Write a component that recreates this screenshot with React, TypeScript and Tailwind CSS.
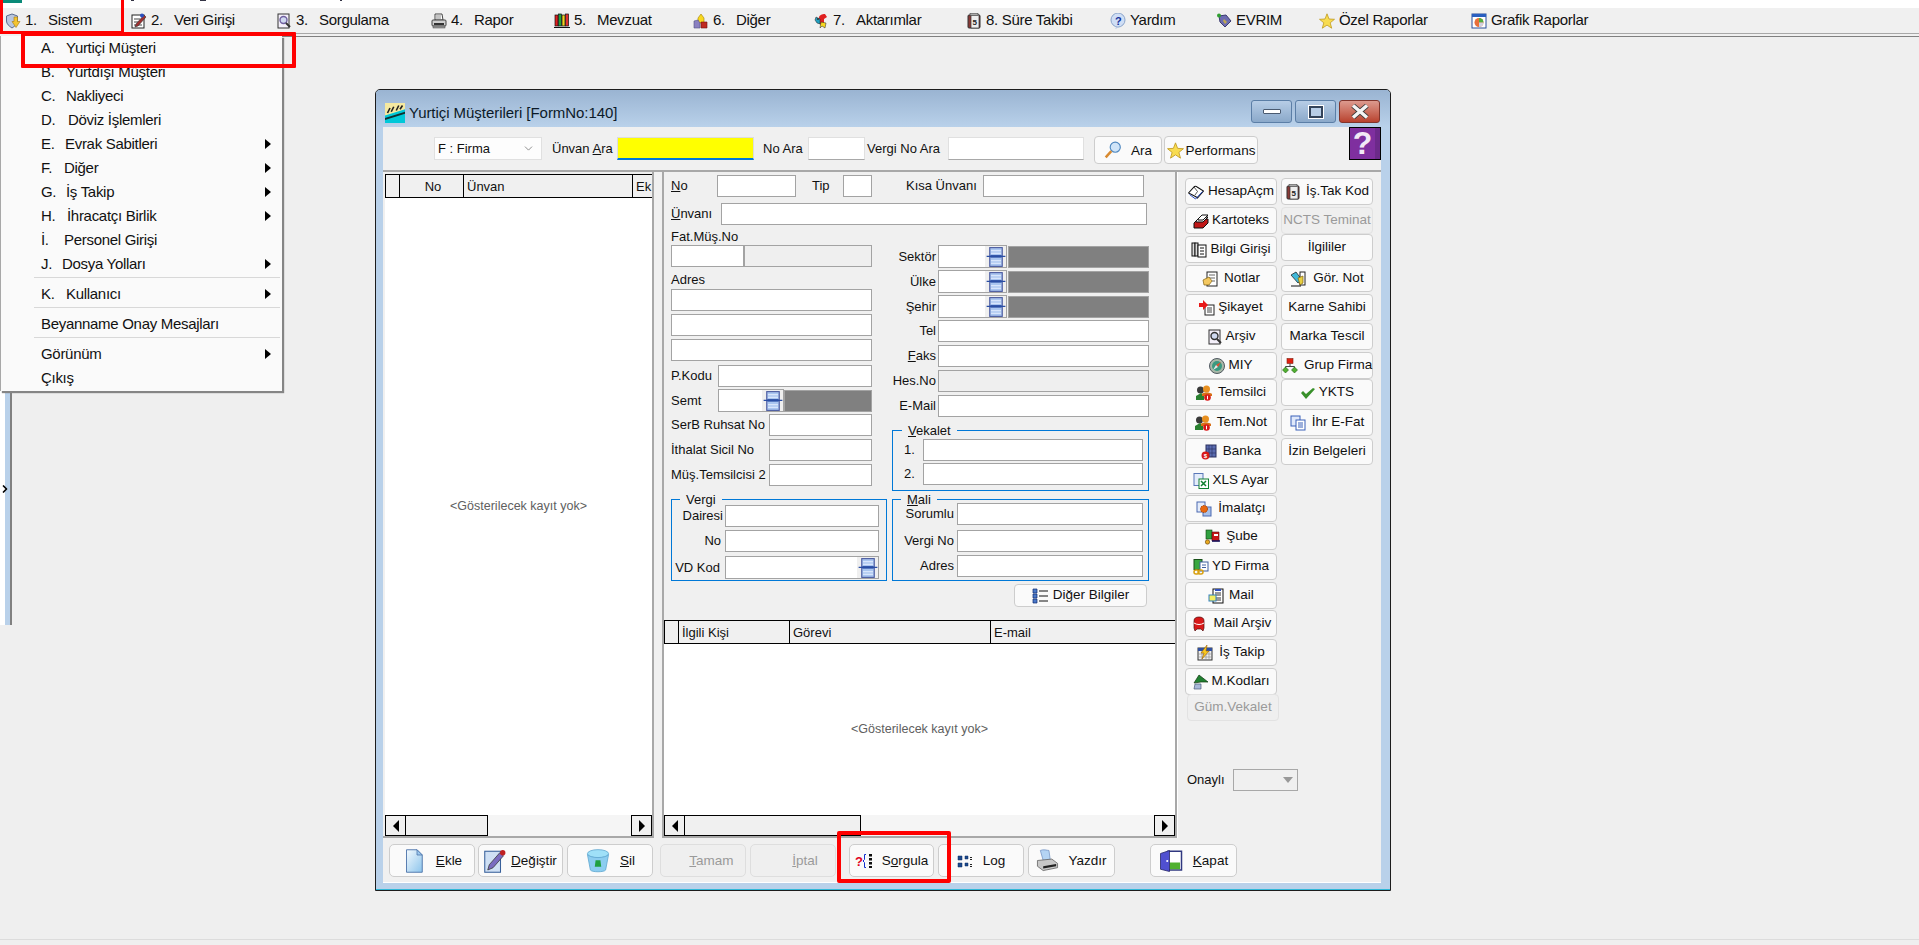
import type { ReactNode } from 'react'
import { ChevronDown, ChevronRight } from 'lucide-react'

const Ic = ({ s = 16, children }: { s?: number; children: ReactNode }) => (
    <svg width={s} height={s} viewBox="0 0 16 16" className="shrink-0">
        {children}
    </svg>
)

// small bitmap-like icons from the old app
const Shield = () => (
    <Ic>
        <path d="M7 1l5.500 2v5c0 3-2.500 5-5.500 7-3-2-5.500-4-5.500-7V3z" fill="#b9c6de" stroke="#5b6c90" />
        <path d="M9 4h3.500v4.500H15l-4 6-4-6h2z" fill="#f4c430" stroke="#a57a10" strokeWidth=".6" />
    </Ic>
)
const NotePen = () => (
    <Ic>
        <rect x="1" y="2" width="12" height="13" fill="#fff" stroke="#222" />
        <path d="M3 6h6M3 9h5M3 12h8" stroke="#444" />
        <path d="M5 11L13 2l2 2-8 9-3 1z" fill="#a03030" stroke="#333" strokeWidth=".6" />
        <circle cx="11" cy="2.500" r="2" fill="#2a4fc0" />
    </Ic>
)
const DocLens = ({ c = '#7060a0' }: { c?: string }) => (
    <Ic>
        <rect x="2" y="1" width="11" height="14" fill="#f4f0fa" stroke="#333" />
        <circle cx="7.500" cy="7" r="3.500" fill="#cfd8f0" stroke={c} strokeWidth="1.400" />
        <path d="M10 10l4 4" stroke="#333" strokeWidth="2" />
    </Ic>
)
const Printer = () => (
    <Ic>
        <path d="M4 1h7l1 6H4z" fill="#fff" stroke="#444" />
        <path d="M5 3h5M5 5h5" stroke="#888" />
        <rect x="1" y="7" width="14" height="6" rx="1" fill="#cfcfcf" stroke="#444" />
        <rect x="3" y="10" width="10" height="2" fill="#333" />
        <rect x="2" y="13" width="12" height="2" fill="#999" stroke="#444" strokeWidth=".5" />
    </Ic>
)
const Books = () => (
    <Ic>
        <rect x="1" y="2" width="3" height="11" fill="#e02020" stroke="#111" strokeWidth=".7" />
        <rect x="4.500" y="1" width="3" height="12" fill="#20a040" stroke="#111" strokeWidth=".7" />
        <rect x="8" y="2" width="3" height="11" fill="#f0d020" stroke="#111" strokeWidth=".7" />
        <rect x="11.500" y="1" width="3" height="12" fill="#e03030" stroke="#111" strokeWidth=".7" />
        <path d="M0 14.500h16" stroke="#111" />
    </Ic>
)
const Shapes = () => (
    <Ic>
        <path d="M8 1l3 4v5H5V5z" fill="#f8d820" stroke="#a08000" strokeWidth=".6" />
        <path d="M1 8l4-1 2 3v5H1z" fill="#8a80c0" stroke="#505080" strokeWidth=".6" />
        <path d="M8 9h6v6H8z" fill="#c02a20" stroke="#701010" strokeWidth=".6" />
    </Ic>
)
const Parrot = () => (
    <Ic>
        <path d="M6 5c0-3 3-4 6-4l2 3-3 2v4l-2 3-3-3z" fill="#e02020" />
        <path d="M3 4l4 2v5l-3-1-2-3z" fill="#20a0c0" stroke="#222" strokeWidth=".5" />
        <path d="M8 9l5 1-1 5-3-2-2 2z" fill="#f8d820" stroke="#222" strokeWidth=".5" />
        <circle cx="5" cy="6" r="1" fill="#333" />
    </Ic>
)
const Clipboard = () => (
    <Ic>
        <rect x="2" y="2" width="12" height="13" rx="1" fill="#8a3a36" stroke="#333" />
        <rect x="5" y="2" width="8" height="13" fill="#eee" stroke="#333" strokeWidth=".7" />
        <rect x="4" y="0.500" width="8" height="2" fill="#aaa" stroke="#333" strokeWidth=".5" />
        <text x="6.600" y="12" fontSize="8" fontWeight="700" fill="#222">5</text>
    </Ic>
)
const HelpBall = () => (
    <Ic>
        <circle cx="8" cy="7" r="7" fill="#cfdef5" stroke="#8ba4ca" />
        <path d="M7 13l-2 3 5-2z" fill="#b5c8e2" />
        <text x="5" y="11.500" fontSize="11" fontWeight="700" fill="#12309a">?</text>
    </Ic>
)
const Gem = () => (
    <Ic>
        <path d="M3 3l7-1 5 6-6 6-5-5z" fill="#6c6cb0" stroke="#3c3c70" />
        <path d="M8 6l3 3-2 2-2-3z" fill="#c0a850" />
        <circle cx="3" cy="2.500" r="2" fill="#30a030" />
    </Ic>
)
const Star = ({ s = 17 }: { s?: number }) => (
    <Ic s={s}>
        <path d="M8 .800l2 5.200 5.500.300-4.300 3.500 1.500 5.400L8 12.100l-4.700 3.100 1.500-5.400L.500 6.300 6 6z" fill="#f8dc50" stroke="#c09a20" strokeWidth=".8" />
    </Ic>
)
const PieWin = () => (
    <Ic>
        <rect x="1" y="1" width="14" height="14" fill="#fff" stroke="#2a4f9a" />
        <rect x="1" y="1" width="14" height="3" fill="#2a5fc0" />
        <circle cx="8" cy="9.500" r="4.500" fill="#e8703a" />
        <path d="M8 9.500V5a4.500 4.500 0 0 1 4.500 4.500z" fill="#50b040" />
        <path d="M8 9.500h4.500A4.500 4.500 0 0 1 8 14z" fill="#d0d0e0" />
    </Ic>
)
const OpenBook = () => (
    <Ic>
        <path d="M.500 9l6-6.500c1-.5 2 0 3 .800l6 3.700-6 7c-1-1-2-1.500-3-2z" fill="#fff" stroke="#111" strokeWidth="1.100" />
        <path d="M6 3l3.500 4.500L7 11" fill="none" stroke="#111" strokeWidth=".7" />
        <path d="M1.500 10.500l6 4.500 7-7.500" fill="none" stroke="#2a4fc0" />
    </Ic>
)
const Cards = () => (
    <Ic>
        <path d="M1 10l4-4h10v4l-5 5H1z" fill="#c01818" stroke="#111" />
        <path d="M3 8l4-4h8l-5 5H3z" fill="#eee" stroke="#111" />
        <path d="M5 6l4-4h6l-5 5H5z" fill="#fff" stroke="#111" />
    </Ic>
)
const DocStack = () => (
    <Ic>
        <rect x="1" y="1" width="3" height="13" fill="#ddd" stroke="#111" />
        <rect x="4" y="1" width="3" height="13" fill="#ddd" stroke="#111" />
        <rect x="7" y="3" width="8" height="12" fill="#fff" stroke="#111" />
        <path d="M9 6h4M9 9h4M9 12h4" stroke="#111" />
    </Ic>
)
const NoteHand = () => (
    <Ic>
        <rect x="5" y="1" width="10" height="14" fill="#fff" stroke="#222" />
        <path d="M7 4h6M7 7h6M10 10h3" stroke="#666" />
        <path d="M1 9l6-3 3 4-3 4H2z" fill="#f4c860" stroke="#806010" strokeWidth=".7" />
    </Ic>
)
const Marker = () => (
    <Ic>
        <path d="M1 4l5-3 6 8-4 3z" fill="#40b8d8" stroke="#111" strokeWidth=".7" />
        <rect x="10" y="1" width="5" height="13" fill="#fff" stroke="#222" />
        <path d="M8 7l5-2v7l-3 2z" fill="#e8d040" stroke="#806010" strokeWidth=".7" />
        <path d="M1 15h10" stroke="#111" />
    </Ic>
)
const Complaint = () => (
    <Ic>
        <rect x="6" y="5" width="9" height="10" fill="#fff" stroke="#222" />
        <path d="M8 8h5M8 10h5M8 12h5" stroke="#444" />
        <path d="M0 3h4V0l5 5-5 5V7H0z" fill="#e81818" />
    </Ic>
)
const Compass = () => (
    <Ic>
        <circle cx="8" cy="8" r="7.500" fill="#a8b8a8" stroke="#505860" />
        <circle cx="8" cy="8" r="5" fill="#3a9a80" />
        <path d="M12 4L9 9 7 7z" fill="#e05030" />
        <path d="M4 12l3-5 2 2z" fill="#e8e8e8" />
    </Ic>
)
const Tree = () => (
    <Ic>
        <rect x="5" y="0.500" width="6" height="5" fill="#e02010" stroke="#802010" strokeWidth=".6" />
        <path d="M8 5.500v3M3.500 10V8.500h9V10" stroke="#444" fill="none" />
        <path d="M3.500 9l3 3-3 3-3-3zM12.500 9l3 3-3 3-3-3z" fill="#50b030" stroke="#206010" strokeWidth=".6" />
    </Ic>
)
const People = () => (
    <Ic>
        <circle cx="4.500" cy="5" r="3.500" fill="#3a3a3a" />
        <circle cx="10.500" cy="4" r="3.500" fill="#e89020" />
        <path d="M0 15v-4l5-3 3 2v5z" fill="#2a8030" />
        <path d="M6 9c1-2 8-2 10 0v2H6z" fill="#d87018" />
        <circle cx="11.500" cy="12.500" r="3.300" fill="#d81818" />
        <rect x="11" y="10.800" width="1" height="3.500" fill="#fff" />
    </Ic>
)
const Check = () => (
    <Ic>
        <path d="M1 8l2-2 3 3 7-6 2 1-9 10z" fill="#38902a" />
    </Ic>
)
const BlueDocs = () => (
    <Ic>
        <rect x="1" y="1" width="9" height="10" fill="#dfe8fa" stroke="#3a60b8" />
        <rect x="6" y="5" width="9" height="10" fill="#fff" stroke="#3a60b8" />
        <path d="M8 8h5M8 10h5M8 12h5" stroke="#3a60b8" />
    </Ic>
)
const Bank = () => (
    <Ic>
        <rect x="5" y="1" width="10" height="12" fill="#5a6cb0" stroke="#2a3060" />
        <path d="M8 1v12M11 1v12M5 5h10M5 9h10" stroke="#2a3060" strokeWidth=".6" />
        <circle cx="4.500" cy="11.500" r="4" fill="#d81818" />
        <text x="2.800" y="14" fontSize="6" fontWeight="700" fill="#fff">$</text>
    </Ic>
)
const Xls = () => (
    <Ic>
        <rect x="1" y="0.500" width="9" height="12" fill="#e4ecfa" stroke="#5a78b8" />
        <rect x="6" y="6" width="9.500" height="9.500" fill="#fff" stroke="#108030" />
        <path d="M8 8l5 5M13 8l-5 5" stroke="#108030" strokeWidth="1.500" />
    </Ic>
)
const DocGear = () => (
    <Ic>
        <rect x="1" y="1" width="8" height="10" fill="#e4ecfa" stroke="#4a68b0" />
        <rect x="7" y="6" width="8" height="9" fill="#a8c0e8" stroke="#4a68b0" />
        <circle cx="8" cy="8" r="3.500" fill="#e86810" stroke="#a04008" strokeDasharray="1.500 1" />
    </Ic>
)
const Truck = () => (
    <Ic>
        <rect x="2" y="1" width="6" height="9" fill="#30a040" stroke="#104010" strokeWidth=".6" />
        <path d="M8 3h7v9H8z" fill="#c81818" stroke="#501010" strokeWidth=".6" />
        <rect x="10" y="5" width="4" height="2" fill="#fff" />
        <circle cx="3.500" cy="13" r="2.200" fill="#e8a820" stroke="#604008" strokeWidth=".6" />
        <path d="M8 12h8" stroke="#101060" strokeWidth="1.500" />
    </Ic>
)
const GreenChain = () => (
    <Ic>
        <rect x="1" y="0.500" width="8" height="10" fill="#38a840" stroke="#185018" />
        <rect x="7" y="3" width="8" height="9" fill="#fff" stroke="#4060a0" />
        <path d="M9 6h4M9 8.500h4" stroke="#4060a0" />
        <rect x="1" y="11" width="5" height="4" rx="2" fill="none" stroke="#d8a010" strokeWidth="1.500" />
        <rect x="5" y="11" width="5" height="4" rx="2" fill="none" stroke="#d8a010" strokeWidth="1.500" />
    </Ic>
)
const MailDoc = () => (
    <Ic>
        <rect x="5" y="1" width="10" height="14" fill="#fff" stroke="#111" />
        <path d="M7 1h6v2H7z" fill="#3050c0" />
        <path d="M7 5h6M7 7h6M7 10h6M7 12h6" stroke="#333" />
        <rect x="1" y="7" width="7" height="6" fill="#f4ec60" stroke="#3080c0" />
    </Ic>
)
const MailBox = () => (
    <Ic>
        <path d="M3 5c0-3 2-4 5-4s5 1 5 4v7l-1 3-2-2H6l-2 2-1-3z" fill="#d81818" stroke="#501010" strokeWidth=".7" />
        <path d="M3 7c3 2 7 2 10 0" stroke="#fff" fill="none" />
    </Ic>
)
const CalBolt = () => (
    <Ic>
        <rect x="1" y="3" width="14" height="12" fill="#eee" stroke="#333" />
        <rect x="1" y="3" width="14" height="3" fill="#3050a0" />
        <path d="M5 6v9M9 6v9M12 6v9M1 9h14M1 12h14" stroke="#888" strokeWidth=".6" />
        <path d="M10 0L4 8h3l-2 6 7-8H9z" fill="#f8c820" stroke="#a06000" strokeWidth=".6" />
    </Ic>
)
const GreenBook = () => (
    <Ic>
        <path d="M1 9l5-8 9 7H8z" fill="#208030" stroke="#103810" strokeWidth=".7" />
        <path d="M2 10h6v5H1z" fill="#a8b8d8" stroke="#4a5a78" strokeWidth=".7" />
    </Ic>
)
const Lookup = () => (
    <div className="flex h-full w-[21px] shrink-0 items-center justify-center bg-[#efefef]">
        <Ic s={20}>
            <rect x="3" y="0.500" width="10" height="15" fill="#aac6f0" stroke="#4a5aa0" strokeWidth=".9" />
            <path d="M4 3h8M4 5h8M4 11h8M4 13h8" stroke="#e8f0ff" strokeWidth=".8" />
            <rect x="0.500" y="7" width="15" height="1" fill="#2a4ea4" />
            <rect x="3.500" y="6.500" width="9" height="2" fill="#2a4ea4" />
        </Ic>
    </div>
)
const BlueDoc = () => (
    <Ic s={24}>
        <defs>
            <linearGradient id="bd" x1="0" y1="0" x2="1" y2="1">
                <stop offset="0" stopColor="#f4fafe" />
                <stop offset="1" stopColor="#8cc4ec" />
            </linearGradient>
        </defs>
        <path d="M3 .500h7l3.500 3.500v11.500H3z" fill="url(#bd)" stroke="#4a70a8" strokeWidth=".6" />
        <path d="M10 .500V4h3.500z" fill="#9cc8ee" stroke="#4a70a8" strokeWidth=".5" />
    </Ic>
)
const PenDoc = () => (
    <Ic s={24}>
        <rect x="0.500" y="1.500" width="10.500" height="14" fill="#cfe0f4" stroke="#38609a" strokeWidth=".7" />
        <path d="M2.500 14l1-3.500 7-8 2.500 2-7 8z" fill="#7a6cc0" stroke="#333" strokeWidth=".5" />
        <circle cx="12.500" cy="2.500" r="1.800" fill="#c02020" />
    </Ic>
)
const Bin = () => (
    <Ic s={26}>
        <ellipse cx="8" cy="3.500" rx="6.500" ry="2.500" fill="#9fe0f8" stroke="#60a8d0" strokeWidth=".5" />
        <path d="M1.500 4l1.800 9.500C4 15 12 15 12.700 13.500L14.500 4c-2 2.500-11 2.500-13 0z" fill="#8ccdf0" stroke="#60a8d0" strokeWidth=".5" />
        <path d="M6.500 7.500h3l.5 4h-4z" fill="#20a040" />
    </Ic>
)
const Query = () => (
    <svg width="18" height="16" viewBox="0 0 18 16" className="shrink-0">
        <text x="0" y="13" fontSize="13" fontWeight="700" fill="#e00020">?</text>
        <path d="M11 1.500H9.500v5L8 8l1.500 1.500v5H11" fill="none" stroke="#1030d0" />
        <path d="M14 1h3v2.500h-3zM14 5h3v2.500h-3zM14 9h3v2.500h-3zM14 13h3v2h-3z" fill="#111" />
    </svg>
)
const LogDots = () => (
    <Ic>
        <path d="M1 3h4v4H1zM1 10h4v4H1zM8 3h3v3H8zM8 10h3v3H8z" fill="#1c4a8c" stroke="#0a2a60" strokeWidth=".5" />
        <path d="M13 4h2v1h-2zM13 11h2v1h-2zM13 6h2v1h-2zM13 13h2v1h-2z" fill="#222" />
    </Ic>
)
const BigPrinter = () => (
    <Ic s={23}>
        <path d="M3 1c2-1 5 0 6 0l1 7H5z" fill="#b4d4f4" stroke="#7090c0" strokeWidth=".5" />
        <path d="M1 8l10-1 4 3v3l-10 2-4-3z" fill="#c8c8c8" stroke="#555" strokeWidth=".5" />
        <path d="M5 12l9-1.500v1.500l-9 1.500z" fill="#222" />
    </Ic>
)
const Door = () => (
    <Ic s={24}>
        <rect x="6" y="1.500" width="9" height="12.500" fill="#fff" stroke="#303880" />
        <rect x="7" y="9" width="7" height="4.500" fill="#50b030" />
        <path d="M1 3l6-2v14l-6-1.500z" fill="#5050d0" stroke="#202060" strokeWidth=".5" />
        <circle cx="5.500" cy="8" r=".7" fill="#fff" />
    </Ic>
)
const Lens = () => (
    <Ic s={18}>
        <circle cx="10" cy="5.500" r="4.500" fill="#cfe4f8" stroke="#4f88c0" />
        <path d="M6.500 9L1.500 14.500" stroke="#d88a30" strokeWidth="2.200" />
    </Ic>
)
const ListIc = () => (
    <Ic>
        <path d="M1 1h4v4H1zM1 6h4v4H1zM1 11h4v4H1z" fill="#4a78c8" stroke="#0c2a70" strokeWidth=".7" />
        <path d="M7 3h9M7 8h9M7 13h9" stroke="#111" />
    </Ic>
)

const topMenu: { icon: ReactNode; no?: string; name: string; w: string }[] = [
    { icon: <Shield />, no: '1.', name: 'Sistem', w: 'w-[126px]' },
    { icon: <NotePen />, no: '2.', name: 'Veri Girişi', w: 'w-[145px]' },
    { icon: <DocLens />, no: '3.', name: 'Sorgulama', w: 'w-[155px]' },
    { icon: <Printer />, no: '4.', name: 'Rapor', w: 'w-[123px]' },
    { icon: <Books />, no: '5.', name: 'Mevzuat', w: 'w-[139px]' },
    { icon: <Shapes />, no: '6.', name: 'Diğer', w: 'w-[120px]' },
    { icon: <Parrot />, no: '7.', name: 'Aktarımlar', w: 'w-[153px]' },
    { icon: <Clipboard />, name: '8. Süre Takibi', w: 'w-[144px]' },
    { icon: <HelpBall />, name: 'Yardım', w: 'w-[106px]' },
    { icon: <Gem />, name: 'EVRIM', w: 'w-[103px]' },
    { icon: <Star s={16} />, name: 'Özel Raporlar', w: 'w-[152px]' },
    { icon: <PieWin />, name: 'Grafik Raporlar', w: 'w-[130px]' },
]

type Drop = { key?: string; keyW?: string; name: string; sub?: boolean; sep?: boolean }
const dropMenu: Drop[] = [
    { key: 'A.', keyW: 'w-[25px]', name: 'Yurtiçi Müşteri' },
    { key: 'B.', keyW: 'w-[25px]', name: 'Yurtdışı Müşteri' },
    { key: 'C.', keyW: 'w-[25px]', name: 'Nakliyeci' },
    { key: 'D.', keyW: 'w-[27px]', name: 'Döviz İşlemleri' },
    { key: 'E.', keyW: 'w-[24px]', name: 'Evrak Sabitleri', sub: true },
    { key: 'F.', keyW: 'w-[23px]', name: 'Diğer', sub: true },
    { key: 'G.', keyW: 'w-[25px]', name: 'İş Takip', sub: true },
    { key: 'H.', keyW: 'w-[26px]', name: 'İhracatçı Birlik', sub: true },
    { key: 'İ.', keyW: 'w-[23px]', name: 'Personel Girişi' },
    { key: 'J.', keyW: 'w-[21px]', name: 'Dosya Yolları', sub: true, sep: true },
    { key: 'K.', keyW: 'w-[25px]', name: 'Kullanıcı', sub: true, sep: true },
    { name: 'Beyanname Onay Mesajları', sep: true },
    { name: 'Görünüm', sub: true },
    { name: 'Çıkış' },
]

function DropMenu() {
    return (
        <div className="absolute left-0 top-[36px] z-10 h-[355px] w-[282px] border-l border-[#a8a8a8] bg-[#fafafa] text-[15px] tracking-[-0.3px] text-[#111] shadow-[2px_2px_1px_#858585]">
            {dropMenu.map((m) => (
                <div key={m.name}>
                    <div className="flex h-[24px] items-center pl-[40px] pr-[11px]">
                        {m.key && <span className={m.keyW}>{m.key}</span>}
                        <span>{m.name}</span>
                        {m.sub && <span className="ml-auto h-0 w-0 border-y-[5px] border-l-[6px] border-y-transparent border-l-black" />}
                    </div>
                    {m.sep && (
                        <div className="h-[6px] pl-[33px] pr-[2px] pt-px">
                            <div className="h-px bg-[#d8d8d8]" />
                        </div>
                    )}
                </div>
            ))}
        </div>
    )
}

const Box = ({ w, off }: { w: string; off?: boolean }) => (
    <input readOnly className={`h-[22px] shrink-0 border border-[#a3a3a3] ${w} ${off ? 'bg-[#efefef]' : 'bg-white'}`} />
)

const Field = ({ w }: { w: string }) => (
    <div className={`flex h-[23px] shrink-0 justify-end border border-[#a3a3a3] bg-white ${w}`}>
        <Lookup />
    </div>
)

const Dark = ({ w }: { w: string }) => <div className={`h-[22px] shrink-0 border border-[#a3a3a3] bg-[#808080] ${w}`} />

const Group = ({ legend, w, h, gap, children }: { legend: ReactNode; w: string; h: string; gap: string; children: ReactNode }) => (
    <div className={`relative shrink-0 border border-[#0078d7] ${w} ${h}`}>
        <span className={`absolute top-[-9px] bg-[#f0f0f0] px-[6px] leading-[17px] ${gap}`}>{legend}</span>
        {children}
    </div>
)

function Scroller({ thumb }: { thumb: string }) {
    return (
        <div className="flex h-[21px] shrink-0 bg-[#f5f5f5]">
            <div className="flex w-[21px] items-center justify-center border border-black bg-[#f0f0f0]">
                <span className="h-0 w-0 border-y-[6px] border-r-[6px] border-y-transparent border-r-black" />
            </div>
            <div className={`border-y border-r border-black bg-[#f0f0f0] ${thumb}`} />
            <div className="ml-auto flex w-[21px] items-center justify-center border border-black bg-[#f0f0f0]">
                <span className="h-0 w-0 border-y-[6px] border-l-[6px] border-y-transparent border-l-black" />
            </div>
        </div>
    )
}

function GridHead({ cols }: { cols: { t: string; w: string; c?: string }[] }) {
    return (
        <div className="flex h-[24px] shrink-0 overflow-hidden border-y border-l border-black bg-[#f0f0f0]">
            {cols.map((c, i) => (
                <div key={i} className={`flex shrink-0 items-center border-r border-black pl-[3px] pt-[2px] ${c.w} ${c.c ?? ''}`}>
                    {c.t}
                </div>
            ))}
        </div>
    )
}

const Empty = () => (
    <div className="flex min-h-0 flex-1 items-center justify-center bg-white text-[12.500px] text-[#606060]">
        {'<Gösterilecek kayıt yok>'}
    </div>
)

type Side = { t: string; i?: ReactNode; c?: string; off?: boolean; gap?: string }
const sideA: Side[] = [
    { t: 'HesapAçm', i: <OpenBook />, gap: 'gap-[4px]' },
    { t: 'Kartoteks', i: <Cards />, c: 'mt-[2px]' },
    { t: 'Bilgi Girişi', i: <DocStack />, c: 'mt-[2px]' },
    { t: 'Notlar', i: <NoteHand />, c: 'mt-[2px]', gap: 'gap-[6px]' },
    { t: 'Şikayet', i: <Complaint />, c: 'mt-[2px]' },
    { t: 'Arşiv', i: <DocLens c="#333" />, c: 'mt-[2px]' },
    { t: 'MIY', i: <Compass />, c: 'mt-[2px]' },
    { t: 'Temsilci', i: <People />, gap: 'gap-[6px]' },
    { t: 'Tem.Not', i: <People />, c: 'mt-[3px]', gap: 'gap-[6px]' },
    { t: 'Banka', i: <Bank />, c: 'mt-[2px]', gap: 'gap-[6px]' },
    { t: 'XLS Ayar', i: <Xls />, c: 'mt-[2px]' },
    { t: 'İmalatçı', i: <DocGear />, c: 'mt-px', gap: 'gap-[6px]' },
    { t: 'Şube', i: <Truck />, c: 'mt-px', gap: 'gap-[6px]' },
    { t: 'YD Firma', i: <GreenChain />, c: 'mt-[3px]' },
    { t: 'Mail', i: <MailDoc />, c: 'mt-[2px]', gap: 'gap-[5px]' },
    { t: 'Mail Arşiv', i: <MailBox />, c: 'mt-px', gap: 'gap-[7px]' },
    { t: 'İş Takip', i: <CalBolt />, c: 'mt-[2px]', gap: 'gap-[6px]' },
    { t: 'M.Kodları', i: <GreenBook />, c: 'mt-[2px]' },
    { t: 'Güm.Vekalet', c: 'ml-[2px] -mt-px', off: true },
]
const sideB: Side[] = [
    { t: 'İş.Tak Kod', i: <Clipboard />, gap: 'gap-[5px]' },
    { t: 'NCTS Teminat', c: 'mt-[2px]', off: true },
    { t: 'İlgililer' },
    { t: 'Gör. Not', i: <Marker />, c: 'mt-[4px]', gap: 'gap-[7px]' },
    { t: 'Karne Sahibi', c: 'mt-[2px]' },
    { t: 'Marka Tescil', c: 'mt-[2px]' },
    { t: 'Grup Firma', i: <Tree />, c: 'mt-[2px]', gap: 'gap-[6px]' },
    { t: 'YKTS', i: <Check /> },
    { t: 'İhr E-Fat', i: <BlueDocs />, c: 'mt-[3px]', gap: 'gap-[6px]' },
    { t: 'İzin Belgeleri', c: 'mt-[2px]' },
]

function SideBtn({ s }: { s: Side }) {
    return (
        <button
            className={`flex h-[27px] w-[92px] shrink-0 items-center justify-center whitespace-nowrap rounded-[4px] border text-[13.500px] ${s.gap ?? 'gap-[3px]'} ${s.c ?? ''} ${
                s.off ? 'border-[#e2e2e2] bg-[#efefef] text-[#9a9a9a]' : 'border-[#cdcdcd] bg-[#fafafa] text-[#111]'
            }`}
        >
            {s.i}
            {s.t}
        </button>
    )
}

function BottomBtn({ w, c, off, gap, icon, children }: { w: string; c?: string; off?: boolean; gap?: string; icon?: ReactNode; children: ReactNode }) {
    return (
        <button
            className={`mt-[6px] flex h-[33px] shrink-0 items-center justify-center rounded-[5px] border ${w} ${gap ?? ''} ${c ?? ''} ${
                off ? 'border-[#dedede] bg-[#efefef] text-[#9a9a9a]' : 'border-[#cdcdcd] bg-[#fafafa]'
            }`}
        >
            {icon}
            <span className="pt-[2px]">{children}</span>
        </button>
    )
}

const LabelRow = ({ w, c, pr = 'pr-[2px]', label, right, children }: { w: string; c?: string; pr?: string; label: ReactNode; right?: boolean; children: ReactNode }) => (
    <div className={`flex items-center whitespace-nowrap ${c ?? ''}`}>
        <span className={`shrink-0 ${w} ${right ? `${pr} text-right` : ''}`}>{label}</span>
        {children}
    </div>
)

function Form() {
    return (
        <div className="h-[448px] shrink-0 pl-[7px] pt-[3px]">
            <div className="flex h-[22px] items-center">
                <span className="w-[46px] shrink-0"><u>N</u>o</span>
                <Box w="w-[79px]" />
                <span className="ml-[16px] w-[31px] shrink-0">Tip</span>
                <Box w="w-[29px]" />
                <span className="ml-[34px] w-[77px] shrink-0">Kısa Ünvanı</span>
                <Box w="w-[161px]" />
            </div>
            <div className="mt-[6px] flex h-[22px] items-center">
                <span className="w-[50px] shrink-0"><u>Ü</u>nvanı</span>
                <Box w="w-[426px]" />
            </div>
            <div className="mt-[3px] flex">
                <div className="flex w-[221px] shrink-0 flex-col">
                    <span className="flex h-[17px] items-center">Fat.Müş.No</span>
                    <div className="flex">
                        <Box w="w-[73px]" />
                        <Box w="w-[128px]" off />
                    </div>
                    <span className="mt-[4px] flex h-[18px] items-center">Adres</span>
                    <Box w="w-[201px]" />
                    <div className="mt-[3px]"><Box w="w-[201px]" /></div>
                    <div className="mt-[3px]"><Box w="w-[201px]" /></div>
                    <LabelRow w="w-[47px]" c="mt-[4px]" label="P.Kodu"><Box w="w-[154px]" /></LabelRow>
                    <LabelRow w="w-[47px]" c="mt-[2px]" label="Semt">
                        <Field w="w-[66px]" />
                        <Dark w="w-[88px]" />
                    </LabelRow>
                    <LabelRow w="w-[98px]" c="mt-[2px]" label="SerB Ruhsat No"><Box w="w-[103px]" /></LabelRow>
                    <LabelRow w="w-[98px]" c="mt-[3px]" label="İthalat Sicil No"><Box w="w-[103px]" /></LabelRow>
                    <LabelRow w="w-[98px]" c="mt-[3px]" label="Müş.Temsilcisi 2"><Box w="w-[103px]" /></LabelRow>
                    <div className="mt-[13px]">
                        <Group legend="Vergi" w="w-[216px]" h="h-[82px]" gap="left-[8px]">
                            <div className="pt-[5px]">
                                <LabelRow w="w-[53px]" right label="Dairesi"><Box w="w-[154px]" /></LabelRow>
                                <LabelRow w="w-[53px]" c="mt-[3px]" pr="pr-[4px]" right label="No"><Box w="w-[154px]" /></LabelRow>
                                <LabelRow w="w-[53px]" c="mt-[4px]" pr="pr-[5px]" right label="VD Kod"><Field w="w-[154px]" /></LabelRow>
                            </div>
                        </Group>
                    </div>
                </div>
                <div className="flex w-[257px] shrink-0 flex-col pt-[17px]">
                    <LabelRow w="w-[46px]" right label="Sektör"><Field w="w-[69px]" /><div className="ml-px"><Dark w="w-[141px]" /></div></LabelRow>
                    <LabelRow w="w-[46px]" c="mt-[2px]" right label="Ülke"><Field w="w-[69px]" /><div className="ml-px"><Dark w="w-[141px]" /></div></LabelRow>
                    <LabelRow w="w-[46px]" c="mt-[2px]" right label="Şehir"><Field w="w-[69px]" /><div className="ml-px"><Dark w="w-[141px]" /></div></LabelRow>
                    <LabelRow w="w-[46px]" c="mt-[2px]" right label="Tel"><Box w="w-[211px]" /></LabelRow>
                    <LabelRow w="w-[46px]" c="mt-[3px]" right label={<><u>F</u>aks</>}><Box w="w-[211px]" /></LabelRow>
                    <LabelRow w="w-[46px]" c="mt-[3px]" right label={<span className="-ml-[4px]">Hes.No</span>}><Box w="w-[211px]" off /></LabelRow>
                    <LabelRow w="w-[46px]" c="mt-[3px]" right label="E-Mail"><Box w="w-[211px]" /></LabelRow>
                    <div className="mt-[13px]">
                        <Group legend={<><u>V</u>ekalet</>} w="w-[257px]" h="h-[61px]" gap="left-[9px]">
                            <div className="pt-[8px]">
                                <LabelRow w="w-[30px] pl-[11px]" label="1."><Box w="w-[220px]" /></LabelRow>
                                <LabelRow w="w-[30px] pl-[11px]" c="mt-[2px]" label="2."><Box w="w-[220px]" /></LabelRow>
                            </div>
                        </Group>
                    </div>
                    <div className="mt-[8px]">
                        <Group legend={<><u>M</u>ali</>} w="w-[257px]" h="h-[82px]" gap="left-[8px]">
                            <div className="pt-[3px]">
                                <LabelRow w="w-[64px]" pr="pr-[3px]" right label="Sorumlu"><Box w="w-[186px]" /></LabelRow>
                                <LabelRow w="w-[64px]" pr="pr-[3px]" c="mt-[5px]" right label="Vergi No"><Box w="w-[186px]" /></LabelRow>
                                <LabelRow w="w-[64px]" pr="pr-[3px]" c="mt-[3px]" right label="Adres"><Box w="w-[186px]" /></LabelRow>
                            </div>
                        </Group>
                    </div>
                    <button className="ml-[122px] mt-[3px] flex h-[23px] w-[133px] items-center justify-center gap-[5px] rounded-[4px] border border-[#cdcdcd] bg-[#fafafa] text-[13.500px]">
                        <ListIc />
                        Diğer Bilgiler
                    </button>
                </div>
            </div>
        </div>
    )
}

function FormWindow() {
    return (
        <div className="ml-[363px] mt-[52px] flex h-[802px] w-[1016px] shrink-0 flex-col rounded-t-[5px] border border-[#1c1c1c] bg-[#b9d1ea] shadow-[inset_0_-1px_0_#30b8d8]">
            <div className="flex h-[37px] shrink-0 items-center rounded-t-[4px] bg-gradient-to-b from-[#9ab4d2] to-[#b9d1ea] pl-[9px] pt-[9px]">
                <Ic s={20}>
                    <rect width="16" height="16" fill="#f5e9a0" />
                    <path d="M0 16V10L16 5v11z" fill="#00c8d8" />
                    <path d="M0 12L16 7v1.500L0 13.500z" fill="#103030" />
                    <path d="M2 8l2-4M5 7l2-4M9 6l2-4M12 5l2-3" stroke="#222" strokeWidth="1.300" />
                </Ic>
                <span className="ml-[4px] text-[15px] tracking-[-0.05px] text-[#0c1a28]">Yurtiçi Müşterileri [FormNo:140]</span>
                <div className="ml-auto mr-[10px] mt-px flex gap-[3px] self-start">
                    <div className="flex h-[23px] w-[41px] items-center justify-center rounded-[3px] border border-[#5b7ea6] bg-gradient-to-b from-[#b7cde6] to-[#8ba9ca]">
                        <span className="h-[5px] w-[18px] rounded-[1px] border border-[#4a5a70] bg-white" />
                    </div>
                    <div className="flex h-[23px] w-[41px] items-center justify-center rounded-[3px] border border-[#5b7ea6] bg-gradient-to-b from-[#b7cde6] to-[#8ba9ca]">
                        <span className="h-[12px] w-[14px] border-2 border-[#33435a] bg-[#b7cde6] outline outline-1 outline-white" />
                    </div>
                    <div className="flex h-[23px] w-[41px] items-center justify-center rounded-[3px] border border-[#80352c] bg-gradient-to-b from-[#dc9a8e] to-[#b8412e]">
                        <svg width="20" height="15" viewBox="0 0 20 15">
                            <path d="M3 1.500l14 12M17 1.500L3 13.500" stroke="#3a3a3a" strokeWidth="5" fill="none" />
                            <path d="M3 1.500l14 12M17 1.500L3 13.500" stroke="#f4f4f4" strokeWidth="3.500" fill="none" />
                        </svg>
                    </div>
                </div>
            </div>

            <div className="ml-[7px] flex h-[756px] w-[998px] flex-col bg-[#f0f0f0]">
                <div className="flex h-[45px] shrink-0 items-start border-b-2 border-[#a8a8a8] pl-[51px]">
                    <div className="mt-[10px] flex h-[23px] w-[108px] shrink-0 items-center justify-between border border-[#e0e0e0] bg-[#fdfdfd] pl-[3px] pr-[6px]">
                        F : Firma
                        <ChevronDown size={13} strokeWidth={1.200} className="text-[#555]" />
                    </div>
                    <span className="ml-[10px] mt-[10px] flex h-[23px] w-[65px] shrink-0 items-center">Ünvan <u className="ml-[3px]">A</u>ra</span>
                    <div className="mt-[10px] h-[23px] w-[137px] shrink-0 border border-[#dcdcdc] border-b-2 border-b-[#0078d7] bg-[#ffff00]" />
                    <span className="ml-[9px] mt-[10px] flex h-[23px] w-[45px] shrink-0 items-center">No Ara</span>
                    <div className="mt-[10px] h-[23px] w-[57px] shrink-0 border border-[#e0e0e0] border-b-[#a8a8a8] bg-white" />
                    <span className="ml-[2px] mt-[10px] flex h-[23px] w-[81px] shrink-0 items-center">Vergi No Ara</span>
                    <div className="mt-[10px] h-[23px] w-[136px] shrink-0 border border-[#e0e0e0] border-b-[#a8a8a8] bg-white" />
                    <button className="ml-[10px] mt-[9px] flex h-[28px] w-[68px] shrink-0 items-center justify-center gap-[9px] rounded-[4px] border border-[#cdcdcd] bg-[#fafafa] text-[13.500px]">
                        <Lens />
                        <span className="pt-[2px]">Ara</span>
                    </button>
                    <button className="ml-[2px] mt-[9px] flex h-[28px] w-[94px] shrink-0 items-center justify-center gap-[2px] rounded-[4px] border border-[#cdcdcd] bg-[#fafafa] text-[13.500px]">
                        <Star />
                        <span className="pt-[2px]">Performans</span>
                    </button>
                    <div className="ml-auto flex h-[33px] w-[32px] shrink-0 border border-black bg-[#7f2f9f]">
                        <span className="flex-1 text-center text-[32px] font-bold leading-[31px] text-[#f2e9f6]">?</span>
                        <span className="w-[5px] shrink-0 bg-[#6c2a8a]" />
                    </div>
                </div>

                <div className="flex h-[666px] shrink-0">
                    <div className="flex w-[271px] shrink-0 flex-col border-b-2 border-r-2 border-[#a8a8a8] pl-[2px] pt-[2px]">
                        <GridHead
                            cols={[
                                { t: '', w: 'w-[14px]' },
                                { t: 'No', w: 'w-[64px]', c: 'justify-center' },
                                { t: 'Ünvan', w: 'w-[169px]' },
                                { t: 'Ek', w: 'w-[20px] border-r-0' },
                            ]}
                        />
                        <Empty />
                        <Scroller thumb="w-[82px]" />
                    </div>
                    <div className="w-[8px] shrink-0" />
                    <div className="flex w-[515px] shrink-0 flex-col border-x-2 border-b-2 border-[#a8a8a8]">
                        <Form />
                        <GridHead
                            cols={[
                                { t: '', w: 'w-[14px]' },
                                { t: 'İlgili Kişi', w: 'w-[111px]' },
                                { t: 'Görevi', w: 'w-[201px]' },
                                { t: 'E-mail', w: 'w-[185px] border-r-0' },
                            ]}
                        />
                        <Empty />
                        <Scroller thumb="w-[176px]" />
                    </div>
                    <div className="flex w-[204px] shrink-0 flex-col border-l border-white pl-[7px] pt-[6px]">
                        <div className="flex gap-[2px]">
                            <div className="flex flex-col">
                                {sideA.map((s) => <SideBtn key={s.t} s={s} />)}
                            </div>
                            <div className="flex flex-col">
                                {sideB.map((s) => <SideBtn key={s.t} s={s} />)}
                            </div>
                        </div>
                        <div className="mb-[47px] mt-auto flex items-center pl-[2px]">
                            <span className="w-[46px]">Onaylı</span>
                            <div className="flex h-[22px] w-[65px] items-center justify-end border border-[#a8a8a8] pr-[4px]">
                                <span className="h-0 w-0 border-x-[5px] border-t-[6px] border-x-transparent border-t-[#999]" />
                            </div>
                        </div>
                    </div>
                </div>

                <div className="flex h-[45px] shrink-0 border-b border-white pl-[6px] text-[13.500px]">
                    <BottomBtn w="w-[86px]" gap="gap-[10px]" icon={<BlueDoc />}><u>E</u>kle</BottomBtn>
                    <BottomBtn w="w-[85px]" c="ml-[3px]" gap="gap-[3px]" icon={<PenDoc />}><u>D</u>eğiştir</BottomBtn>
                    <BottomBtn w="w-[86px]" c="ml-[4px]" gap="gap-[9px]" icon={<Bin />}><u>S</u>il</BottomBtn>
                    <BottomBtn w="w-[86px]" c="ml-[7px] pl-[17px]" off><u>T</u>amam</BottomBtn>
                    <BottomBtn w="w-[86px]" c="ml-[4px] pl-[24px]" off><u>İ</u>ptal</BottomBtn>
                    <BottomBtn w="w-[85px]" c="ml-[13px]" gap="gap-[9px]" icon={<Query />}>S<u>o</u>rgula</BottomBtn>
                    <BottomBtn w="w-[86px]" c="ml-[4px]" gap="gap-[10px]" icon={<LogDots />}>Log</BottomBtn>
                    <BottomBtn w="w-[87px]" c="ml-[4px]" gap="gap-[9px]" icon={<BigPrinter />}>Yazdır</BottomBtn>
                    <BottomBtn w="w-[87px]" c="ml-[35px]" gap="gap-[10px]" icon={<Door />}><u>K</u>apat</BottomBtn>
                </div>
            </div>
        </div>
    )
}

export default function App() {
    return (
        <div className="relative h-screen w-full overflow-hidden bg-[#efefef] font-['Liberation_Sans',Arial,sans-serif] text-[13px] text-[#111]">
            <div className="flex h-[8px] bg-white">
                <div className="h-[3px] w-[22px] bg-[#0a8a78]" />
                <div className="ml-[109px] h-px w-[3px] bg-[#334]" />
                <div className="ml-[66px] h-px w-[6px] bg-[#334]" />
                <div className="ml-[134px] h-px w-[2px] bg-[#334]" />
            </div>
            <div className="flex h-[25px] items-center bg-[#f0f0f0] pl-[5px] text-[15px] tracking-[-0.3px]">
                {topMenu.map((m) => (
                    <div key={m.name} className={`flex shrink-0 items-center whitespace-nowrap ${m.w}`}>
                        <span className="mr-[4px] flex">{m.icon}</span>
                        {m.no && <span className="w-[23px] shrink-0">{m.no}</span>}
                        <span>{m.name}</span>
                    </div>
                ))}
            </div>
            <div className="h-[4px] border-y border-b-[#808080] border-t-[#a8a8a8] bg-[#f0f0f0]" />

            <div className="flex h-[903px] border-b border-[#dcdcdc]">
                <div className="flex h-[588px] w-[12px] shrink-0 flex-col border-r-2 border-[#808080] bg-gradient-to-r from-white from-50% to-[#b9d1ea] to-50%">
                    <ChevronRight size={12} strokeWidth={3.500} className="-ml-px mt-[446px] text-black" />
                </div>
                <FormWindow />
            </div>

            <DropMenu />

            <div className="pointer-events-none absolute left-0 top-[-4px] z-20 h-[38px] w-[124px] border-[3px] border-[#ff0000]" />
            <div className="pointer-events-none absolute left-[21px] top-[32px] z-20 h-[36px] w-[275px] rounded-[1px] border-[4px] border-[#ff0000]" />
            <div className="pointer-events-none absolute left-[837px] top-[831px] z-20 h-[52px] w-[114px] rounded-[2px] border-[4px] border-[#ff0000]" />
        </div>
    )
}
